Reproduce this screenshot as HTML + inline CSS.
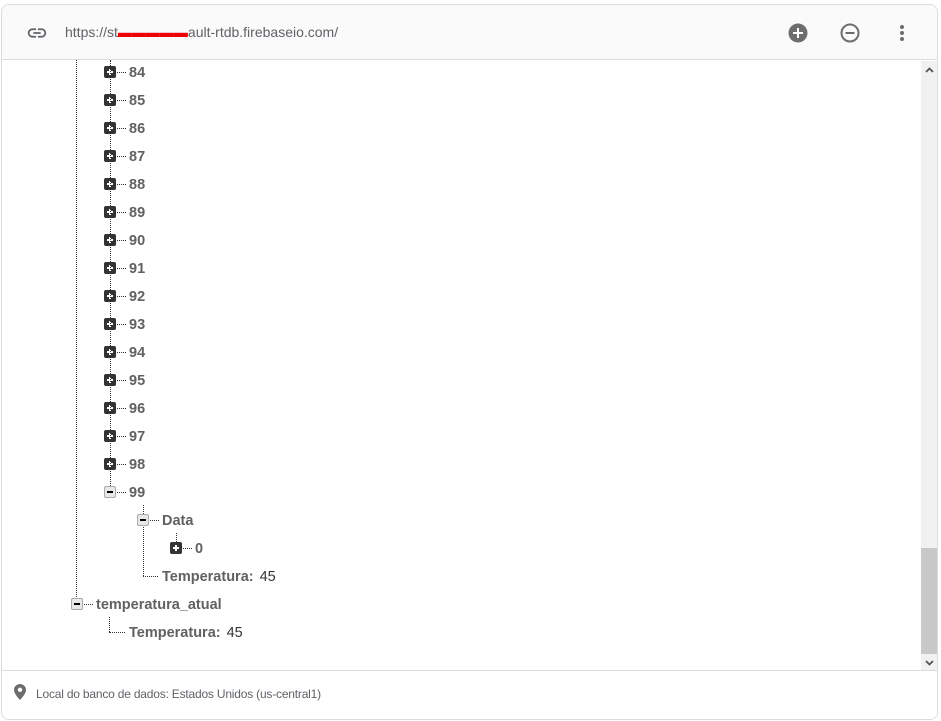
<!DOCTYPE html>
<html><head><meta charset="utf-8"><style>
*{margin:0;padding:0;box-sizing:border-box}
body{width:941px;height:721px;background:#fff;position:relative;overflow:hidden;font-family:"Liberation Sans",Arial,sans-serif}
.card{position:absolute;left:1px;top:4px;width:937px;height:716px;border:1px solid #dadce0;border-radius:8px;overflow:hidden;background:#fff}
.hdr{position:absolute;left:0;top:0;right:0;height:55px;background:#fafafa;border-bottom:1px solid #dadce0}
.url{position:absolute;left:63px;top:19px;font-size:14px;color:#5f6368}
.ftr{position:absolute;left:0;bottom:0;right:0;height:49px;border-top:1px solid #dadce0;background:#fff}
.ftr span{position:absolute;left:34px;top:16px;font-size:12px;color:#5f6368;letter-spacing:-0.2px}
.sb{position:absolute;left:919px;top:56px;width:17px;height:611px;background:#f1f1f1}
.thumb{position:absolute;left:0;top:487px;width:17px;height:106px;background:#c8c8c8}
.a{position:absolute}
.box{position:absolute;width:12px;height:12px;border-radius:2px}
.plus{background:#333}
.plus:before{content:"";position:absolute;left:3px;top:5px;width:6px;height:2px;background:#fff}
.plus:after{content:"";position:absolute;left:5px;top:3px;width:2px;height:6px;background:#fff}
.minus{background:#e8e8e8;border:1px solid #aaa}
.minus:before{content:"";position:absolute;left:2px;top:4px;width:6px;height:2px;background:#000}
.h{position:absolute;border-top:1px dotted #333;height:0}
.v{position:absolute;border-left:1px dotted #333;width:0}
.t{position:absolute;font-size:14.5px;font-weight:bold;color:#616161;line-height:16px}
.val{font-weight:normal;color:#333;margin-left:6px}
</style></head><body>
<div class="card">
<div class="hdr">
<svg class="a" style="left:24px;top:17px" width="22" height="22" viewBox="0 0 24 24"><path fill="#5f6368" d="M3.9 12c0-1.71 1.39-3.1 3.1-3.1h4V7H7c-2.76 0-5 2.240-5 5s2.24 5 5 5h4v-1.9H7c-1.71 0-3.1-1.39-3.1-3.1zM8 13h8v-2H8v2zm9-6h-4v1.9h4c1.71 0 3.1 1.39 3.1 3.1s-1.39 3.1-3.1 3.1h-4V17h4c2.76 0 5-2.24 5-5s-2.24-5-5-5z"/></svg>
<div class="url">https://st<span style="color:#e00">▬▬▬▬▬</span>ault-rtdb.firebaseio.com/</div>
<svg class="a" style="left:786px;top:18px" width="20" height="20" viewBox="0 0 20 20"><circle cx="10" cy="10" r="9.5" fill="#6d6d6d"/><path d="M10 5v10M5 10h10" stroke="#fff" stroke-width="2"/></svg>
<svg class="a" style="left:838px;top:18px" width="20" height="20" viewBox="0 0 20 20"><circle cx="10" cy="10" r="8.5" fill="none" stroke="#6d6d6d" stroke-width="2"/><path d="M5.5 10h9" stroke="#6d6d6d" stroke-width="2"/></svg>
<svg class="a" style="left:897px;top:19px" width="6" height="18" viewBox="0 0 6 18"><circle cx="3" cy="3" r="2" fill="#6d6d6d"/><circle cx="3" cy="9" r="2" fill="#6d6d6d"/><circle cx="3" cy="15" r="2" fill="#6d6d6d"/></svg>
</div>
<div class="sb"><div class="thumb"></div>
<svg class="a" style="left:4px;top:6px" width="9" height="6" viewBox="0 0 9 6"><path d="M1 5l3.5-3.5L8 5" fill="none" stroke="#555" stroke-width="1.8"/></svg>
<svg class="a" style="left:4px;top:599px" width="9" height="6" viewBox="0 0 9 6"><path d="M1 1l3.5 3.5L8 1" fill="none" stroke="#555" stroke-width="1.8"/></svg>
</div>
<div class="ftr">
<svg class="a" style="left:12px;top:13px" width="12" height="16" viewBox="0 0 12 16"><path fill="#6d6d6d" d="M6 0C2.7 0 0 2.6 0 5.8 0 10.2 6 16 6 16s6-5.8 6-10.2C12 2.6 9.3 0 6 0zm0 8a2.2 2.2 0 110-4.4A2.2 2.2 0 016 8z"/></svg>
<span>Local do banco de dados: Estados Unidos (us-central1)</span></div>
</div>
<div id="tree"></div>
<div class="v" style="left:76px;top:60px;height:543px"></div>
<div class="v" style="left:110px;top:60px;height:426px"></div>
<script>
var html='';
for(var i=0;i<15;i++){var y=72+i*28;
html+='<div class="box plus" style="left:104px;top:'+(y-6)+'px"></div><div class="h" style="left:117px;top:'+y+'px;width:9px"></div><div class="t" style="left:129px;top:'+(y-7)+'px">'+(84+i)+'</div>';}
document.getElementById('tree').innerHTML=html;
</script>
<div class="box minus" style="left:104px;top:486px"></div><div class="h" style="left:117px;top:492px;width:9px"></div><div class="t" style="left:129px;top:485px">99</div>
<div class="v" style="left:143px;top:505px;height:71px"></div>
<div class="box minus" style="left:137px;top:514px"></div><div class="h" style="left:150px;top:520px;width:9px"></div><div class="t" style="left:162px;top:513px">Data</div>
<div class="v" style="left:176px;top:533px;height:9px"></div>
<div class="box plus" style="left:170px;top:542px"></div><div class="h" style="left:183px;top:548px;width:9px"></div><div class="t" style="left:195px;top:541px">0</div>
<div class="h" style="left:143px;top:576px;width:15px"></div><div class="t" style="left:162px;top:569px">Temperatura:<span class="val">45</span></div>
<div class="box minus" style="left:71px;top:598px"></div><div class="h" style="left:84px;top:604px;width:9px"></div><div class="t" style="left:96px;top:597px">temperatura_atual</div>
<div class="v" style="left:109px;top:617px;height:15px"></div><div class="h" style="left:109px;top:632px;width:16px"></div><div class="t" style="left:129px;top:625px">Temperatura:<span class="val">45</span></div>
</body></html>
